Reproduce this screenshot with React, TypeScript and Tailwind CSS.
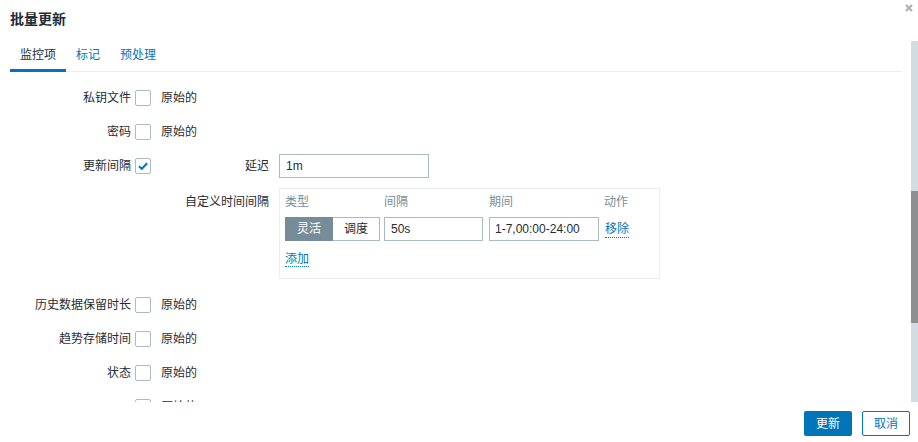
import React from "react";

const FONT = "font-['Liberation_Sans','Noto_Sans_CJK_SC',sans-serif]";

function Checkbox({ checked }: { checked?: boolean }) {
  return (
    <span className="w-4 h-4 border border-[#acbbc2] rounded-[2px] bg-white flex items-center justify-center shrink-0">
      {checked && (
        <svg width="12" height="12" viewBox="0 0 12 12">
          <path d="M2 6.2 L4.8 8.8 L10.2 3.2" stroke="#0275b8" strokeWidth="2" fill="none" />
        </svg>
      )}
    </span>
  );
}

function Row({ label, checked, children }: { label: string; checked?: boolean; children?: React.ReactNode }) {
  return (
    <div className="flex items-center h-6">
      <div className="w-[121px] text-right leading-4">{label}</div>
      <div className="ml-1 flex items-center">
        <Checkbox checked={checked} />
        {children ?? <span className="ml-[10px] leading-4">原始的</span>}
      </div>
    </div>
  );
}

function Link({ children }: { children: React.ReactNode }) {
  return (
    <span className="text-[#0275b8] leading-4 border-b border-dotted border-[#0275b8]">{children}</span>
  );
}

export default function App() {
  return (
    <div className={`w-[918px] h-[442px] bg-white relative overflow-hidden text-[12px] text-[#1f2c33] ${FONT}`}>
      {/* header */}
      <div className="h-[41px] pl-[10px] pt-[11px]">
        <div className="text-[14px] font-bold leading-4 text-[#1f2c33]">批量更新</div>
      </div>
      <button className="absolute top-[4px] right-[5px] w-[8px] h-[8px] flex items-center justify-center">
        <svg width="8" height="8" viewBox="0 0 8 8">
          <path d="M1 1 L7 7 M7 1 L1 7" stroke="#a5b0b6" strokeWidth="2" />
        </svg>
      </button>

      {/* body */}
      <div className="h-[361px] flex">
        <div className="flex-1 overflow-hidden pl-[10px] pr-[9px]">
          <div className="flex h-[31px] border-b border-[#ebeef0]">
            <div className="px-[10px] flex items-center border-b-[3px] border-[#0275b8] -mb-px leading-4">监控项</div>
            <div className="px-[10px] flex items-center border-b-[3px] border-transparent -mb-px leading-4 text-[#0275b8]">标记</div>
            <div className="px-[10px] flex items-center border-b-[3px] border-transparent -mb-px leading-4 text-[#0275b8]">预处理</div>
          </div>

          <div className="mt-[14px] flex flex-col gap-[10px]">
            <Row label="私钥文件" />
            <Row label="密码" />

            <div className="flex items-start">
              <div className="w-[121px] h-6 flex items-center justify-end leading-4">更新间隔</div>
              <div className="ml-1 h-6 flex items-center">
                <Checkbox checked />
              </div>
              <div className="flex flex-col gap-[10px]">
                <div className="flex items-center">
                  <div className="w-[118px] text-right leading-4">延迟</div>
                  <div className="ml-[10px] w-[150px] h-6 border border-[#acbbc2] flex items-center px-[6px] leading-4">1m</div>
                </div>
                <div className="flex items-start">
                  <div className="w-[118px] text-right leading-4 pt-[6px]">自定义时间间隔</div>
                  <div className="ml-[10px] w-[381px] border border-[#ebeef0] pt-[5px] pl-[5px] pb-[11px]">
                    <div className="flex leading-4 text-[#768d99]">
                      <div className="w-[99px]">类型</div>
                      <div className="w-[105px]">间隔</div>
                      <div className="w-[115px]">期间</div>
                      <div>动作</div>
                    </div>
                    <div className="flex items-center mt-[7px] h-6">
                      <div className="flex h-6 w-[95px]">
                        <div className="w-[48px] bg-[#768d99] border border-[#768d99] text-white flex items-center justify-center leading-4">灵活</div>
                        <div className="w-[47px] bg-white border border-[#acbbc2] border-l-0 flex items-center justify-center leading-4">调度</div>
                      </div>
                      <div className="ml-[4px] w-[99px] h-6 border border-[#acbbc2] flex items-center px-[6px] leading-4">50s</div>
                      <div className="ml-[6px] w-[110px] h-6 border border-[#acbbc2] flex items-center px-[5px] leading-4">1-7,00:00-24:00</div>
                      <div className="ml-[6px] flex items-center">
                        <Link>移除</Link>
                      </div>
                    </div>
                    <div className="mt-[10px] h-4 flex">
                      <Link>添加</Link>
                    </div>
                  </div>
                </div>
              </div>
            </div>

            <div className="mt-[4px] flex flex-col gap-[10px]">
              <Row label="历史数据保留时长" />
              <Row label="趋势存储时间" />
              <Row label="状态" />
              <Row label="" />
            </div>
          </div>
        </div>
        {/* scrollbar */}
        <div className="w-[7px] bg-[#d3dce0] flex flex-col">
          <div className="h-[150px]" />
          <div className="h-[132px] bg-[#8e8f90]" />
        </div>
      </div>

      {/* footer */}
      <div className="h-[40px] flex justify-end items-start pt-[9px] pr-[8px] gap-[10px]">
        <button className="w-[48px] h-[25px] bg-[#0275b8] text-white rounded-[2px] leading-4 flex items-center justify-center">更新</button>
        <button className="w-[48px] h-[25px] bg-white text-[#0275b8] border border-[#0275b8] rounded-[2px] leading-4 flex items-center justify-center">取消</button>
      </div>
    </div>
  );
}
